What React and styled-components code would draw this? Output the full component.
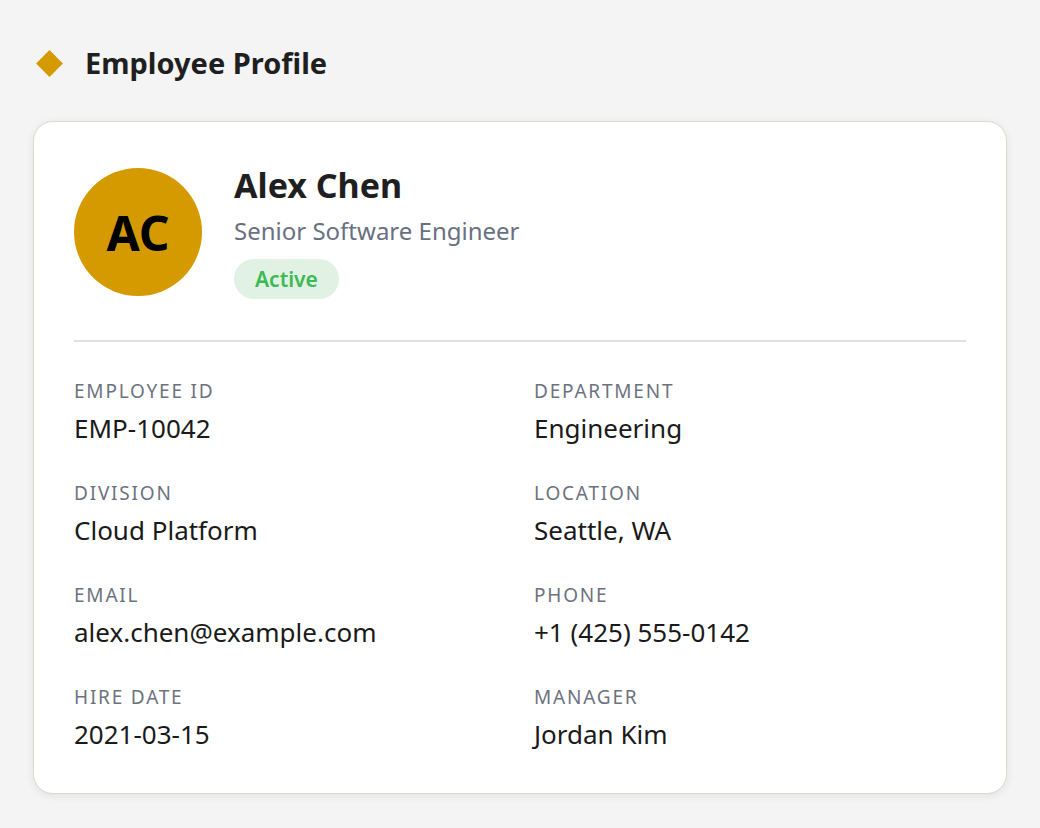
import React from 'react';
import styled, { createGlobalStyle } from 'styled-components';

const GlobalStyle = createGlobalStyle`
    body {
        margin: 0;
        background: #f4f4f4;
        font-family: "Noto Sans", "Open Sans", sans-serif;
        color: #1f1f1f;
    }
`

const Page = styled.div`
    padding: 44px 33px 32px 33px;
`

const Heading = styled.div`
    display: flex;
    align-items: center;
    gap: 26px;
    padding-left: 7px;
    margin-bottom: 39px;
`

const Diamond = styled.span`
    width: 19px;
    height: 19px;
    background: #d49a00;
    transform: rotate(45deg);
`

const Title = styled.h1`
    margin: 0;
    font-size: 29px;
    font-weight: 700;
    line-height: 38px;
    color: #1f1f1f;
`

const Card = styled.div`
    background: #ffffff;
    border: 1px solid #dcd9d0;
    border-radius: 20px;
    box-shadow: 0 2px 8px rgba(0, 0, 0, 0.08);
    padding: 43px 40px 39px;
`

const Header = styled.div`
    display: flex;
    align-items: center;
    gap: 32px;
    padding-bottom: 41px;
    border-bottom: 2px solid #e0e0e0;
`

const Avatar = styled.div`
    width: 128px;
    height: 128px;
    border-radius: 50%;
    background: #d49a00;
    color: #000;
    display: flex;
    align-items: center;
    justify-content: center;
    font-size: 48px;
    font-weight: 700;
    flex-shrink: 0;
`

const Info = styled.div`
    display: flex;
    flex-direction: column;
    align-items: flex-start;
`

const Name = styled.h2`
    margin: 0;
    font-size: 34px;
    font-weight: 700;
    line-height: 40px;
    color: #1f1f1f;
`

const Role = styled.div`
    font-size: 24px;
    color: #687082;
    margin-top: 10px;
    line-height: 32px;
`

const Badge = styled.span`
    margin-top: 12px;
    padding: 6px 21px;
    border-radius: 20px;
    background: #e1f1e4;
    color: #3dba55;
    font-size: 21px;
    font-weight: 600;
    line-height: 28px;
`

const Fields = styled.div`
    display: grid;
    grid-template-columns: 1fr 1fr;
    column-gap: 28px;
    row-gap: 31px;
    padding-top: 35px;
`

const Field = styled.div`
    display: flex;
    flex-direction: column;
    gap: 4px;
`

const Label = styled.span`
    font-size: 19px;
    letter-spacing: 1.8px;
    text-transform: uppercase;
    color: #6d7280;
    line-height: 28px;
`

const Value = styled.span`
    font-size: 26px;
    color: #1a1a1a;
    line-height: 39px;
`

const fields = [
    ['Employee ID', 'EMP-10042'],
    ['Department', 'Engineering'],
    ['Division', 'Cloud Platform'],
    ['Location', 'Seattle, WA'],
    ['Email', 'alex.chen@example.com'],
    ['Phone', '+1 (425) 555-0142'],
    ['Hire Date', '2021-03-15'],
    ['Manager', 'Jordan Kim'],
]

const App = () => {
    return (
        <Page>
            <GlobalStyle />
            <Heading>
                <Diamond />
                <Title>Employee Profile</Title>
            </Heading>
            <Card>
                <Header>
                    <Avatar>AC</Avatar>
                    <Info>
                        <Name>Alex Chen</Name>
                        <Role>Senior Software Engineer</Role>
                        <Badge>Active</Badge>
                    </Info>
                </Header>
                <Fields>
                    {fields.map(([label, value]) => (
                        <Field key={label}>
                            <Label>{label}</Label>
                            <Value>{value}</Value>
                        </Field>
                    ))}
                </Fields>
            </Card>
        </Page>
    )
}

export default App;
